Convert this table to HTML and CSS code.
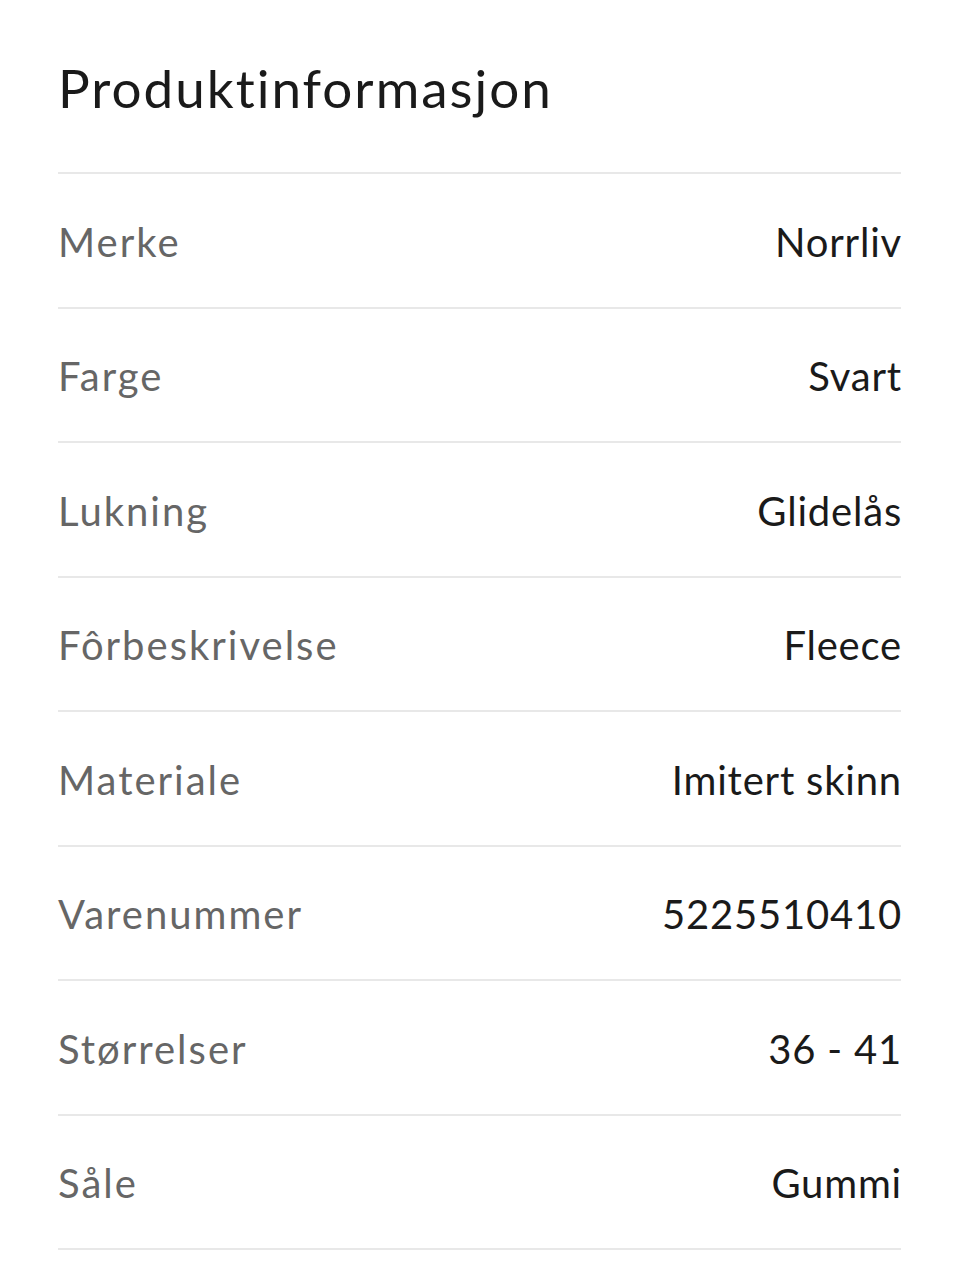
FILE: index.html
```html
<!DOCTYPE html>
<html lang="no">
<head>
<meta charset="utf-8">
<title>Produktinformasjon</title>
<link rel="stylesheet" href="styles.css">
</head>
<body>

<div class="info">
  <h1 class="info-title">Produktinformasjon</h1>

  <div class="info-row"><span class="info-key">Merke</span><span class="info-val">Norrliv</span></div>
  <div class="info-row"><span class="info-key">Farge</span><span class="info-val">Svart</span></div>
  <div class="info-row"><span class="info-key">Lukning</span><span class="info-val">Glidelås</span></div>
  <div class="info-row"><span class="info-key">Fôrbeskrivelse</span><span class="info-val">Fleece</span></div>
  <div class="info-row"><span class="info-key">Materiale</span><span class="info-val">Imitert skinn</span></div>
  <div class="info-row"><span class="info-key">Varenummer</span><span class="info-val">5225510410</span></div>
  <div class="info-row"><span class="info-key">Størrelser</span><span class="info-val">36 - 41</span></div>
  <div class="info-row"><span class="info-key">Såle</span><span class="info-val">Gummi</span></div>
</div>

</body>
</html>
```

FILE: styles.css
```css
body, html {
  margin: 0;
  padding: 0;
  background: #fff;
  color: #1a1a1a;
  font-family: Lato, "Noto Sans", sans-serif;
}

.info {
  padding: 0 59px 0 58px;
}

.info-title {
  margin: 0;
  height: 174px;
  box-sizing: border-box;
  padding-top: 2px;
  display: flex;
  align-items: center;
  font-size: 53px;
  font-weight: 400;
  letter-spacing: 2px;
  color: #1a1a1a;
  border-bottom: 2px solid #e8e8e8;
}

.info-row {
  height: 134.5px;
  box-sizing: border-box;
  display: flex;
  justify-content: space-between;
  align-items: center;
  border-bottom: 2px solid #e8e8e8;
  font-size: 40px;
  padding-top: 3px;
}

.info-key {
  color: #666;
  letter-spacing: 2px;
}

.info-val {
  color: #1a1a1a;
  letter-spacing: 0.8px;
  margin-right: -1px;
}
```
